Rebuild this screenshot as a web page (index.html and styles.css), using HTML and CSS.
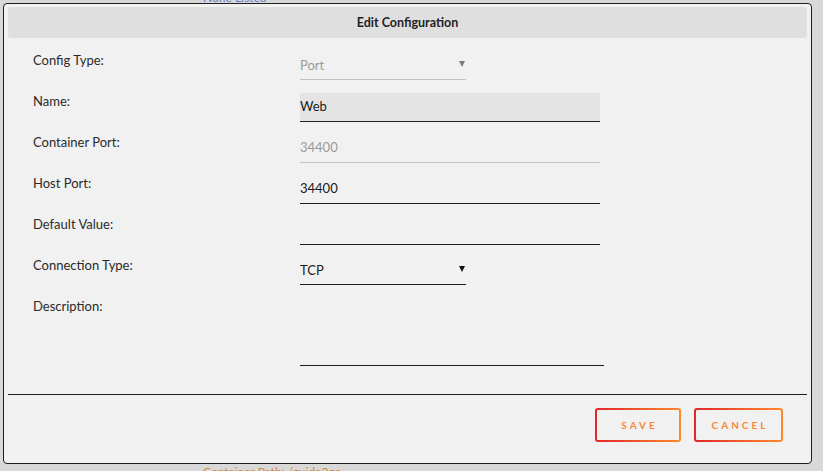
FILE: index.html
```html
<!DOCTYPE html>
<html>
<head>
<meta charset="utf-8">
<link rel="stylesheet" href="styles.css">
</head>
<body>
<div class="page">
  <div class="bg-list">
    <div class="bg-item bg-none">None Listed</div>
    <div class="bg-item bg-path">Container Path: /guide2go</div>
  </div>
</div>
<div class="modal">
  <div class="modal-header">Edit Configuration</div>
  <div class="modal-body">
    <div class="row">
      <div class="label">Config Type:</div>
      <div class="field select disabled"><span>Port</span><svg class="arrow" width="6" height="6" viewBox="0 0 6 6"><path d="M0 0H6L3 6Z" fill="#7a7a7a"/></svg></div>
    </div>
    <div class="row">
      <div class="label">Name:</div>
      <div class="field text filled">Web</div>
    </div>
    <div class="row">
      <div class="label">Container Port:</div>
      <div class="field text disabled">34400</div>
    </div>
    <div class="row">
      <div class="label">Host Port:</div>
      <div class="field text">34400</div>
    </div>
    <div class="row">
      <div class="label">Default Value:</div>
      <div class="field text"></div>
    </div>
    <div class="row">
      <div class="label">Connection Type:</div>
      <div class="field select"><span>TCP</span><svg class="arrow" width="6" height="6" viewBox="0 0 6 6"><path d="M0 0H6L3 6Z" fill="#111"/></svg></div>
    </div>
    <div class="row row-tall">
      <div class="label">Description:</div>
      <div class="field textarea"></div>
    </div>
  </div>
  <div class="modal-footer">
    <button class="btn">SAVE</button>
    <button class="btn">CANCEL</button>
  </div>
</div>
</body>
</html>
```

FILE: styles.css
```css
html, body {
  margin: 0;
  padding: 0;
}
body {
  background: #d8d8d8;
  font-family: Lato, "Open Sans", sans-serif;
  width: 823px;
  height: 471px;
  overflow: hidden;
  position: relative;
}
.page {
  height: 471px;
}
.bg-list {
  display: flex;
  flex-direction: column;
  justify-content: space-between;
  height: 488px;
  margin-top: -9px;
  padding-left: 203px;
}
.bg-item {
  font-size: 12px;
  line-height: 14px;
}
.bg-none { color: #5f83c4; }
.bg-path { color: #d38a3c; }

.modal {
  position: absolute;
  left: 3px;
  top: 3px;
  width: 807px;
  height: 459px;
  background: #f1f1f1;
  border: 1px solid #1e1e1e;
  border-radius: 4px;
  display: flex;
  flex-direction: column;
}
.modal-header {
  margin: 3px 4px 0 4px;
  height: 31px;
  background: #dfdfdf;
  border-radius: 3px;
  display: flex;
  align-items: center;
  justify-content: center;
  font-weight: bold;
  font-size: 12.5px;
  color: #222;
}
.modal-body {
  padding: 14px 0 0 25px;
  display: flex;
  flex-direction: column;
  gap: 12px;
  height: 357px;
  box-sizing: border-box;
  border-bottom: 1px solid #1e1e1e;
  margin: 0 4px;
}
.row {
  display: grid;
  grid-template-columns: 267px auto;
  height: 29px;
}
.row-tall {
  height: 68px;
}
.label {
  font-size: 13px;
  line-height: 17px;
  color: #2a2a2a;
}
.field {
  box-sizing: border-box;
  height: 29px;
  border-bottom: 1px solid #1e1e1e;
  font-size: 13px;
  line-height: 16px;
  padding: 5px 0 0 0;
  color: #1a1a1a;
}
.text { width: 300px; }
.filled { background: #e4e4e4; }
.select {
  width: 166px;
  height: 28px;
  display: flex;
  justify-content: space-between;
  align-items: flex-start;
}
.select .arrow {
  margin-top: 4px;
  margin-right: 1px;
}
.disabled {
  color: #9a9a9a;
  border-bottom-color: #c2c2c2;
}
.textarea {
  width: 304px;
  height: 68px;
}
.modal-footer {
  display: flex;
  justify-content: flex-end;
  gap: 13px;
  padding: 13px 28px 0 0;
}
.btn {
  width: 86px;
  height: 34px;
  box-sizing: border-box;
  border: 2px solid transparent;
  border-radius: 3px;
  background: linear-gradient(#f1f1f1, #f1f1f1) padding-box,
              linear-gradient(90deg, #e1262a, #ff8a2b) border-box;
  font-family: Lato, sans-serif;
  font-weight: bold;
  font-size: 10px;
  letter-spacing: 3px;
  color: #f7873a;
  padding: 0 0 0 3px;
  cursor: pointer;
}
.btn + .btn { width: 89px; }
```
